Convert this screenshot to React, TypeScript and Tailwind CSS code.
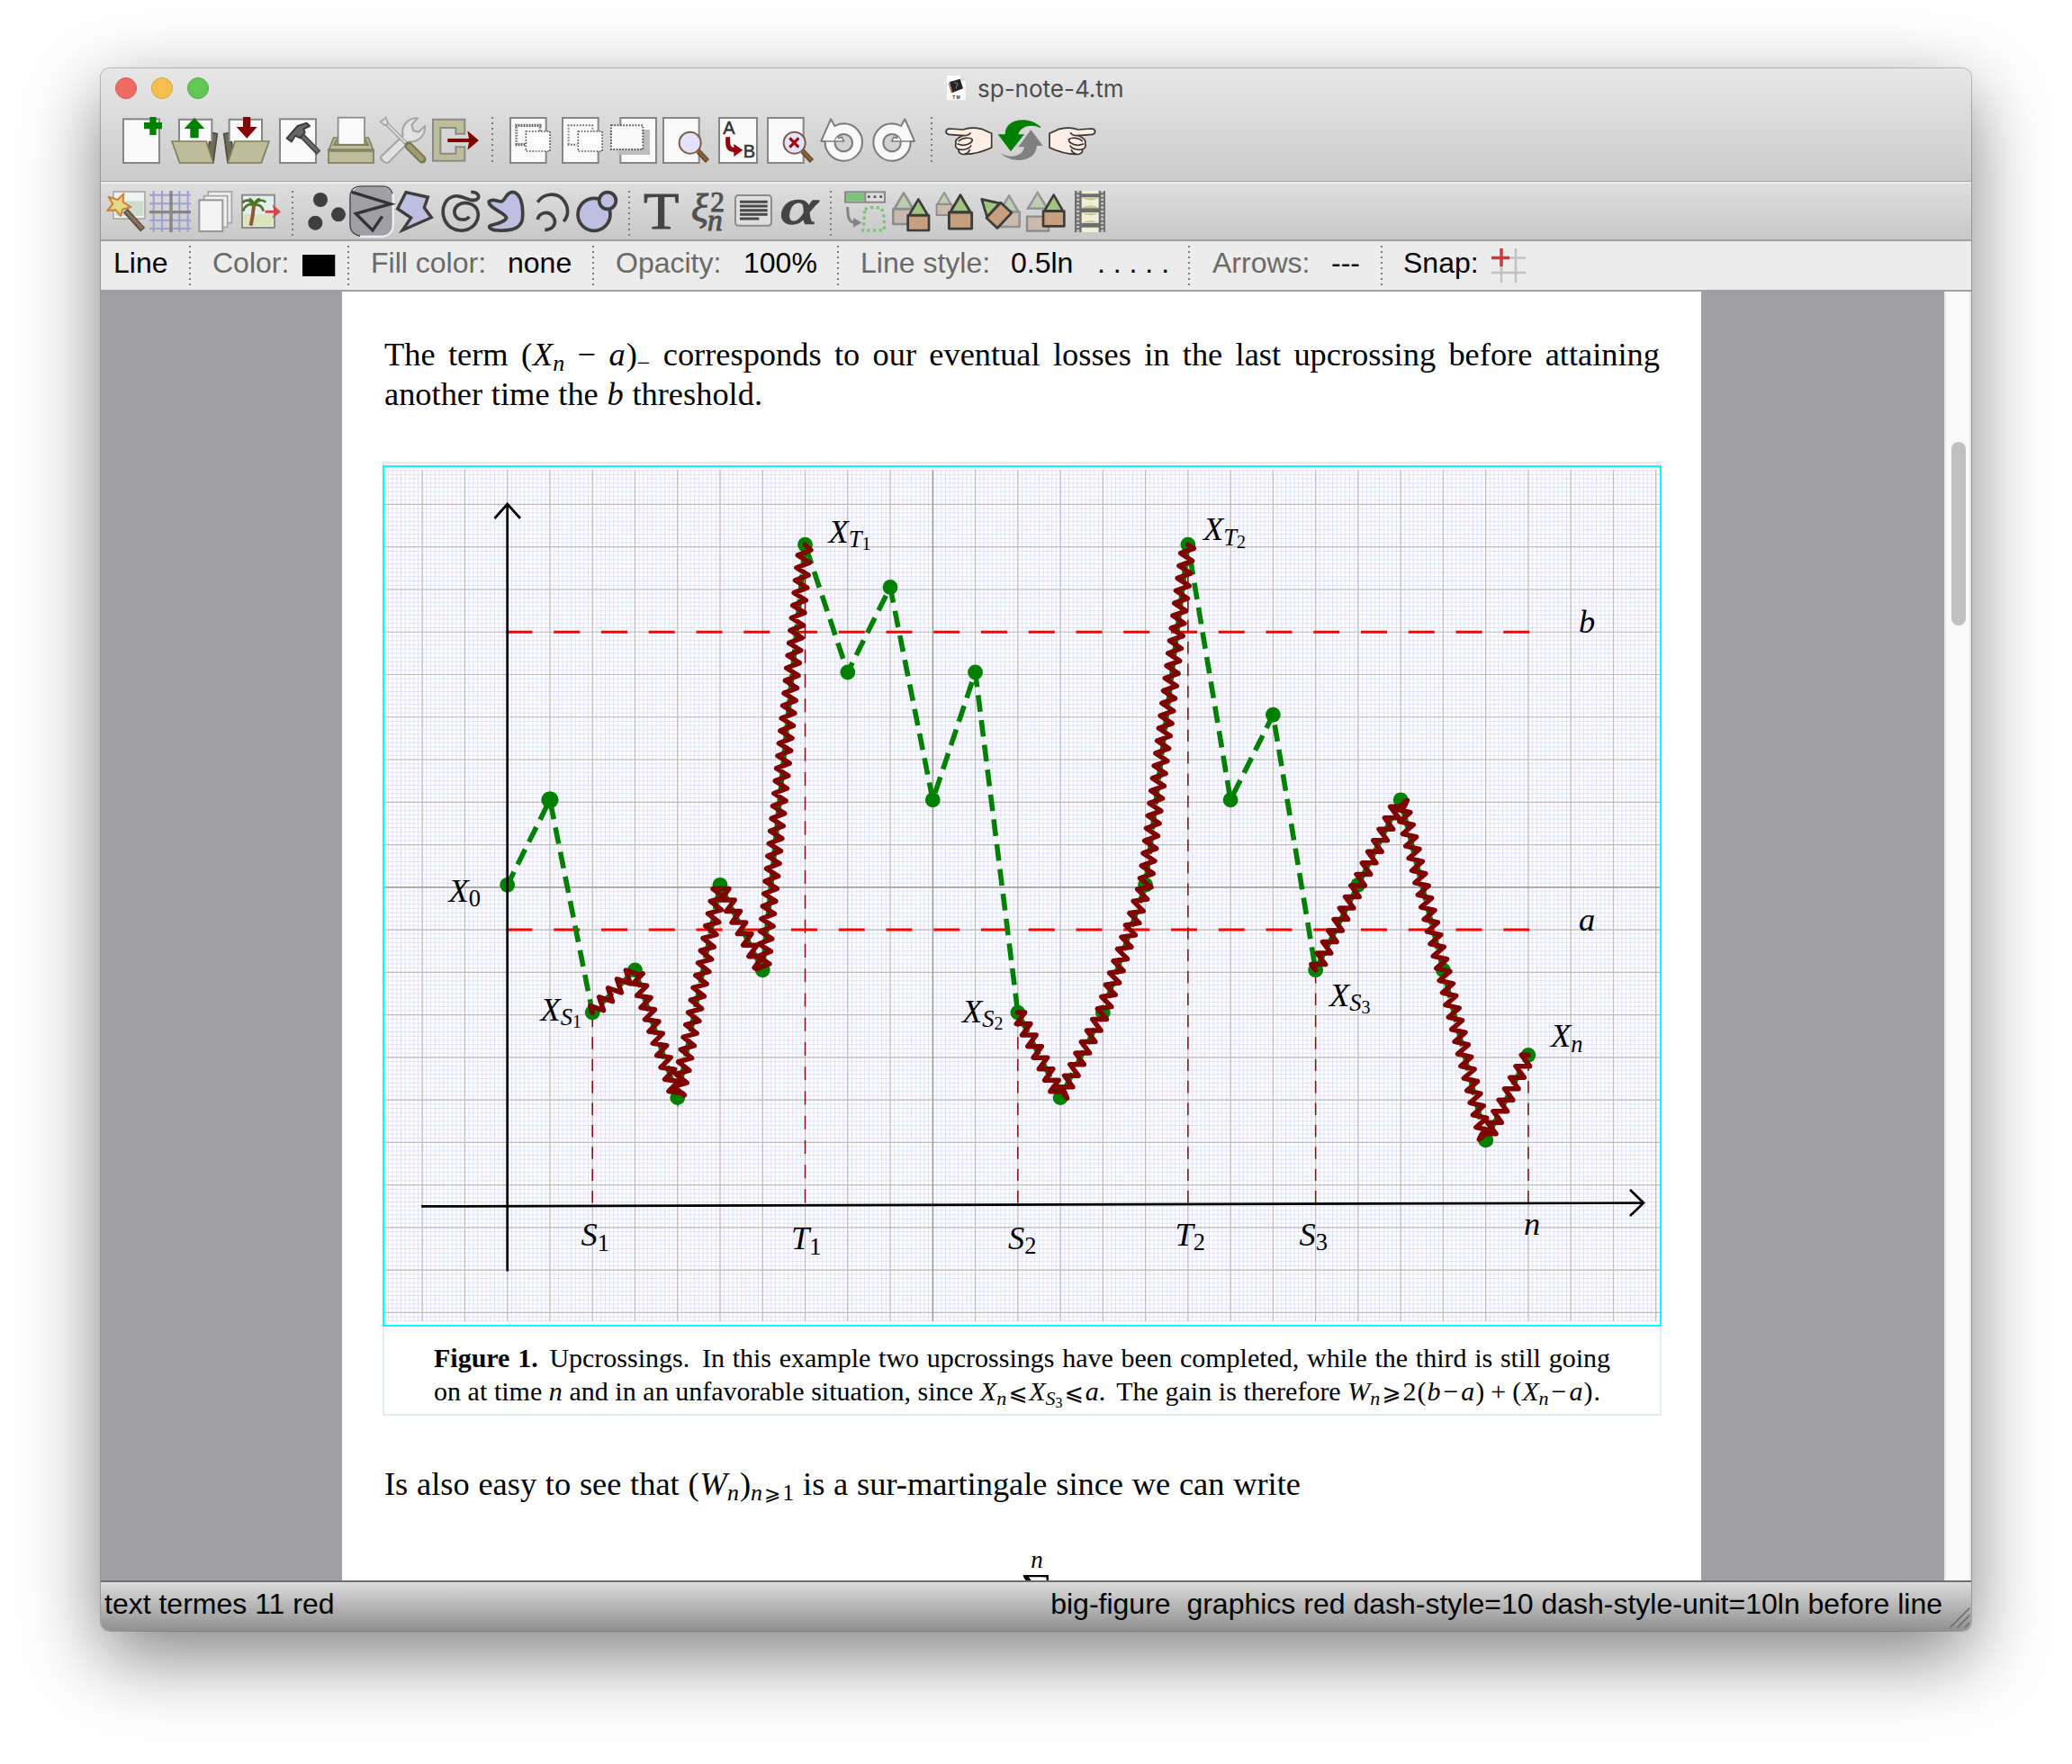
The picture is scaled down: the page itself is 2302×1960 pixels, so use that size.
import React from "react";

type P = { x: number; children?: React.ReactNode };

/* Main toolbar icons live in a 52px slot, drawn at triple resolution. */
const Big = ({ x, children }: P) => (
  <svg className="h-[52px] w-[52px] shrink-0 overflow-visible" viewBox={`${x} 210 156 156`}>
    {children}
  </svg>
);

/* Mode toolbar icons live in a 46px slot, drawn at triple resolution. */
const Small = ({ x, children }: P) => (
  <svg className="h-[46px] w-[46px] shrink-0 overflow-visible" viewBox={`${x} 456 138 138`}>
    {children}
  </svg>
);

const dots = "shrink-0 w-[2px] bg-[repeating-linear-gradient(to_bottom,#7c7c7c_0px,#7c7c7c_2px,transparent_2px,transparent_6px)]";
const BigSep = () => <div className={`${dots} mx-[8px] h-[50px]`} />;
const SmallSep = () => <div className={`${dots} ml-[8px] mr-[10px] h-[50px]`} />;
const FocusSep = () => <div className={`${dots} h-[44px]`} />;

const Sheet = ({ x, y = 213, w = 119, h = 150 }: { x: number; y?: number; w?: number; h?: number }) => (
  <rect x={x} y={y} width={w} height={h} fill="#fafafa" stroke="#868686" strokeWidth="6" />
);

const Lens = ({ dx = 0, cross = false }: { dx?: number; cross?: boolean }) => (
  <g transform={`translate(${dx} 0)`}>
    <path d="M707 324L738 357" stroke="#5f4424" strokeWidth="17" />
    <path d="M708 324L737 355" stroke="#8b6239" strokeWidth="9" />
    <circle cx="680" cy="296" r="36" fill="#e3e3fd" stroke="#7c5c42" strokeWidth="6" />
    {cross && <path d="M664 280L694 311M694 280L664 311" stroke="#a00008" strokeWidth="9" />}
  </g>
);

const Ring = () => (
  <g stroke="#7c7c7c" strokeWidth="6" strokeLinejoin="round">
    <path d="M1192 232A62 62 0 1 1 1130 292L1117 290L1149 217L1162 240A62 62 0 0 1 1192 232Z" fill="#f9f9f9" />
    <circle cx="1192" cy="296" r="29" fill="#d2d2d2" />
    <path d="M1162 292L1169 278L1184 276L1194 292Z" fill="#f9f9f9" stroke="none" />
    <path d="M1117 291H1193L1186 277L1172 281" fill="none" strokeWidth="5" />
  </g>
);

const Hand = () => (
  <g stroke="#3a3330" strokeWidth="5" strokeLinejoin="round" strokeLinecap="round">
    <path
      d="M485 265L452 250C430 245 405 246 390 252L345 249C330 250 329 265 342 268L388 272C370 280 362 288 366 298C362 308 368 316 376 318C372 330 385 336 397 334C425 334 455 326 485 312Z"
      fill="#fdeee6"
    />
    <path d="M388 271C398 274 410 270 414 264M376 290C386 280 410 276 420 284C424 294 408 302 392 304M376 317C388 322 412 316 416 306M397 333C404 330 410 326 412 320M372 300L388 304" fill="none" />
  </g>
);

const Folder = () => (
  <g>
    <path d="M403 262L424 266L411 362L388 360Z" fill="#6b6b58" stroke="#4d4d42" strokeWidth="5" />
    <path d="M297 290V218H406V290" fill="#fafafa" stroke="#868686" strokeWidth="6" />
    <path d="M273 291H387L411 363H299Z" fill="#bdbd9a" stroke="#7e7e5e" strokeWidth="5" />
  </g>
);

const House = ({ x, y, s = 1, o = 1, r = 0 }: { x: number; y: number; s?: number; o?: number; r?: number }) => (
  <g transform={`translate(${x} ${y}) rotate(${r}) scale(${s})`} opacity={o} stroke="#3c3c3c" strokeWidth="8" strokeLinejoin="round">
    <path d="M0 0L-31 53H31Z" fill="#a0c47e" />
    <path d="M-35 54H35V104H-35Z" fill="#c59f7f" />
  </g>
);

const MainToolbar = () => (
  <div className="flex h-[78px] items-start gap-[6px] pl-[20px] pt-[6px]">
    <Big x={96}>
      <Sheet x={111} y={217} w={120} h={146} />
      <path d="M210 210V270M180 239H240" stroke="#008000" strokeWidth="22" />
    </Big>
    <Big x={270}>
      <Folder />
      <path d="M348 212L382 249H362V280H334V249H314Z" fill="#008000" />
    </Big>
    <Big x={444}>
      <g transform="translate(870 0) scale(-1 1)">
        <Folder />
      </g>
      <path d="M523 281L557 243H535V210H510V243H488Z" fill="#800000" />
    </Big>
    <Big x={618}>
      <Sheet x={633} y={217} w={120} h={146} />
      <path d="M702 268L762 329" stroke="#3d3d3d" strokeWidth="19" />
      <path d="M704 270L760 326" stroke="#6a6a6a" strokeWidth="10" />
      <path d="M656 281L672 292L684 272L700 280L716 262L712 250L732 240L722 230L692 240Z" fill="#666" stroke="#3d3d3d" strokeWidth="6" strokeLinejoin="round" />
    </Big>
    <Big x={792}>
      <path d="M812 279H928L944 320H796Z" fill="#bdbd9a" stroke="#7e7e5e" strokeWidth="5" />
      <path d="M822 284L812 304H928L918 284" fill="#9b9b77" stroke="#7e7e5e" strokeWidth="4" />
      <rect x="827" y="212" width="88" height="90" fill="#fafafa" stroke="#868686" strokeWidth="5" />
      <path d="M816 303H926" stroke="#7e7e5e" strokeWidth="5" />
      <rect x="795" y="319" width="150" height="44" fill="#bdbd9a" stroke="#7e7e5e" strokeWidth="5" />
      <path d="M798 324H942" stroke="#8c8c68" strokeWidth="6" />
    </Big>
    <Big x={966}>
      <path
        d="M970 342L1043 272C1036 242 1058 212 1092 214L1072 236L1078 256L1096 260L1116 240C1120 270 1094 294 1064 292L994 362C984 366 966 352 970 342Z"
        fill="#e2e2e2"
        stroke="#a2a2a2"
        strokeWidth="6"
        strokeLinejoin="round"
      />
      <path d="M980 224L1064 308" stroke="#9c9c9c" strokeWidth="13" />
      <path d="M980 224L1062 306" stroke="#e8e8e8" strokeWidth="5" />
      <path d="M968 226L986 212L994 232L982 238Z" fill="#ddd" stroke="#a2a2a2" strokeWidth="5" />
      <path d="M1062 306L1107 351" stroke="#74744c" strokeWidth="27" strokeLinecap="round" />
      <path d="M1064 308L1105 349" stroke="#9c9c70" strokeWidth="17" strokeLinecap="round" />
    </Big>
    <Big x={1140}>
      <path
        d="M1143 218H1249V266H1219V246H1168V332H1219V310H1249V356H1143Z"
        fill="#bdbd9a"
        stroke="#8a8a86"
        strokeWidth="6"
      />
      <path d="M1192 288H1266" stroke="#800000" strokeWidth="12" />
      <path d="M1258 256L1296 288L1258 320L1264 288Z" fill="#800000" />
    </Big>
    <BigSep />
    <Big x={66}>
      <Sheet x={81} />
      <path d="M98 238H184M98 302H130" stroke="#555" strokeWidth="10" strokeDasharray="5 4" />
      <path d="M101 234V306M180 234V260" stroke="#888" strokeWidth="9" strokeDasharray="5 4" />
      <rect x="133" y="258" width="80" height="66" fill="#fff" stroke="#555" strokeWidth="5" strokeDasharray="5 5" />
    </Big>
    <Big x={240}>
      <Sheet x={255} />
      <path d="M272 238H358M272 302H304" stroke="#666" strokeWidth="6" strokeDasharray="5 5" />
      <path d="M275 236V306M355 236V260" stroke="#888" strokeWidth="6" strokeDasharray="5 5" />
      <rect x="307" y="258" width="80" height="66" fill="#fff" stroke="#555" strokeWidth="5" strokeDasharray="5 5" />
    </Big>
    <Big x={414}>
      <Sheet x={448} />
      <rect x="440" y="252" width="106" height="84" fill="#bdbdbd" />
      <rect x="417" y="238" width="106" height="80" fill="#fafafa" stroke="#555" strokeWidth="6" strokeDasharray="5 5" />
    </Big>
    <Big x={588}>
      <Sheet x={591} />
      <Lens />
    </Big>
    <Big x={762}>
      <Sheet x={777} w={126} />
      <text x="790" y="267" fontSize="60" fill="#333" stroke="#333" strokeWidth="1.5" className="[font-family:'Liberation_Sans',sans-serif]">A</text>
      <text x="857" y="345" fontSize="60" fill="#333" stroke="#333" strokeWidth="1.5" className="[font-family:'Liberation_Sans',sans-serif]">B</text>
      <path d="M806 277V296C806 314 816 320 832 320" fill="none" stroke="#960008" strokeWidth="15" />
      <path d="M826 300L856 320L826 342Z" fill="#960008" />
    </Big>
    <Big x={936}>
      <Sheet x={939} />
      <Lens dx={348} cross />
    </Big>
    <Big x={1110}>
      <Ring />
    </Big>
    <Big x={84}>
      <g transform="translate(1345 0) scale(-1 1)">
        <Ring />
      </g>
    </Big>
    <BigSep />
    <Big x={330}>
      <Hand />
    </Big>
    <Big x={504}>
      <path d="M648 247C620 232 582 240 574 268H594L549 325L506 268H530C530 215 605 205 648 242Z" fill="#008000" />
      <path d="M516 330C545 350 590 342 594 310H574L616 252L656 306H636C632 365 545 365 516 330Z" fill="#808080" />
    </Big>
    <Big x={678}>
      <g transform="translate(1163 0) scale(-1 1)">
        <Hand />
      </g>
    </Big>
  </div>
);

const ModeToolbar = () => (
  <div className="relative flex h-[64px] items-start gap-[4px] border-t-2 border-[#ededed] bg-linear-to-b from-[#dedede] to-[#c8c8c8] pl-[4px] pt-[8px]">
    <Small x={48}>
      <rect x="78" y="459" width="105" height="90" fill="#eef3f3" stroke="#a9a9a9" strokeWidth="5" />
      <rect x="86" y="490" width="92" height="50" fill="#cfdccc" />
      <path d="M118 522L176 586" stroke="#5d4a3c" strokeWidth="20" />
      <path d="M120 524L174 582" stroke="#8d7460" strokeWidth="10" />
      <path d="M112 466L110 494L136 510L108 518L102 540L86 520L58 522L76 500L62 476L92 486Z" fill="#e4da84" stroke="#cc7f36" strokeWidth="6" strokeLinejoin="round" />
    </Small>
    <Small x={198}>
      <path d="M212 456V594M240 456V594M298 456V594M326 456V594M198 470H336M198 499H336M198 554H336M198 582H336" stroke="#9f9fd0" strokeWidth="6" />
      <path d="M270 456V594M198 527H336" stroke="#868686" strokeWidth="10" />
    </Small>
    <Small x={348}>
      <rect x="394" y="459" width="78" height="104" fill="#ededed" stroke="#a4a4a4" strokeWidth="5" />
      <rect x="380" y="473" width="78" height="104" fill="#f1f1f1" stroke="#a4a4a4" strokeWidth="5" />
      <rect x="364" y="487" width="78" height="104" fill="#f3f3f3" stroke="#969696" strokeWidth="6" />
    </Small>
    <Small x={498}>
      <rect x="507" y="470" width="108" height="109" fill="#e3efef" stroke="#8c8c8c" strokeWidth="6" />
      <rect x="512" y="534" width="98" height="40" fill="#dce4bc" />
      <path d="M536 572C542 545 544 528 546 506" stroke="#8a5640" strokeWidth="12" fill="none" />
      <path d="M546 504C530 496 516 506 510 524M546 504C530 484 518 484 508 496M546 504C560 484 576 484 586 494M546 504C564 500 574 508 578 524M546 504C544 492 536 484 530 482M546 504C550 490 560 484 566 482" fill="none" stroke="#4e7420" strokeWidth="8" />
      <path d="M584 526H618" stroke="#cc4a4a" strokeWidth="9" />
      <path d="M608 502L636 526L608 548L614 526Z" fill="#cc4a4a" />
    </Small>
    <SmallSep />
    <Small x={720}>
      <g fill="#3e3e3e">
        <circle cx="768" cy="486" r="24" />
        <circle cx="828" cy="535" r="24" />
        <circle cx="751" cy="563" r="24" />
      </g>
    </Small>
    <Small x={870}>
      <rect x="867" y="441" width="143" height="167" rx="36" fill="#a09fa4" stroke="#f4f4fa" strokeWidth="6" />
      <path d="M900 607C878 602 867 588 867 570V477C867 455 880 441 903 441H974C992 441 1004 450 1008 466" fill="none" stroke="#4a4a4e" strokeWidth="5" />
      <path d="M872 460L1002 500L886 532L942 588L974 541" fill="none" stroke="#333" strokeWidth="10" />
    </Small>
    <Small x={1020}>
      <path d="M1053 461L1126 477L1114 512L1138 545L1042 587L1070 546L1025 516Z" fill="#bebee0" stroke="#3e3e3e" strokeWidth="10" />
    </Small>
    <Small x={1170}>
      <path d="M1270 461C1290 458 1302 474 1290 484C1268 498 1244 468 1214 474C1186 480 1172 508 1178 540C1186 574 1212 590 1244 588C1280 584 1300 552 1292 524C1284 496 1244 488 1224 506C1206 524 1216 552 1242 552C1252 552 1260 548 1264 542" fill="none" stroke="#3e3e3e" strokeWidth="11" />
    </Small>
    <Small x={0}>
      <path d="M10 491C22 482 36 490 50 492C64 492 64 462 88 460C114 462 124 500 122 540C122 580 90 590 40 588C20 588 4 578 14 572C36 566 64 560 68 546C66 530 4 512 10 491Z" fill="#bebee0" stroke="#3e3e3e" strokeWidth="11" />
    </Small>
    <Small x={150}>
      <path d="M172 494C190 466 236 456 260 490C276 512 276 540 258 558M172 552C176 530 206 520 222 540C240 564 222 586 196 586" fill="none" stroke="#3e3e3e" strokeWidth="11" />
    </Small>
    <Small x={300}>
      <circle cx="360" cy="535" r="54" fill="#bebee0" stroke="#3e3e3e" strokeWidth="11" />
      <circle cx="405" cy="489" r="28" fill="#bebee0" stroke="#3e3e3e" strokeWidth="11" />
    </Small>
    <SmallSep />
    <Small x={522}>
      <text x="525" y="581" fontSize="172" textLength="118" lengthAdjust="spacingAndGlyphs" fill="#444" stroke="#444" strokeWidth="3" className="[font-family:'Liberation_Serif',serif]">T</text>
    </Small>
    <Small x={672}>
      <g fill="#505050" stroke="#505050" strokeWidth="3" className="italic [font-family:'Liberation_Serif',serif]">
        <text x="684" y="559" fontSize="132">ξ</text>
        <text x="748" y="526" fontSize="94" className="not-italic">2</text>
        <text x="738" y="587" fontSize="100">n</text>
      </g>
    </Small>
    <Small x={822}>
      <rect x="831" y="471" width="120" height="101" rx="10" fill="#dedede" stroke="#8c8c8c" strokeWidth="6" />
      <path d="M846 493H938M846 507H938M846 521H938M846 535H938M846 549H910" stroke="#484848" strokeWidth="9" />
    </Small>
    <Small x={972}>
      <text x="980" y="564" fontSize="166" textLength="124" lengthAdjust="spacingAndGlyphs" fill="#444" stroke="#444" strokeWidth="5" className="italic [font-family:'Liberation_Serif',serif]">α</text>
    </Small>
    <SmallSep />
    <Small x={1194}>
      <rect x="1197" y="460" width="132" height="34" fill="#dcdcdc" stroke="#8a8a8a" strokeWidth="6" />
      <rect x="1200" y="463" width="62" height="28" fill="#7cc47c" />
      <path d="M1264 460V494" stroke="#8a8a8a" strokeWidth="6" />
      <path d="M1272 476H1324" stroke="#555" strokeWidth="8" strokeDasharray="8 12" />
      <path d="M1205 510C1206 545 1208 560 1228 562" fill="none" stroke="#838383" strokeWidth="9" />
      <path d="M1224 546L1252 562L1224 578Z" fill="#838383" />
      <path d="M1262 518L1284 511L1318 513L1328 548L1326 588L1256 588L1260 560Z" fill="none" stroke="#7cc47c" strokeWidth="10" strokeDasharray="10 10" />
    </Small>
    <Small x={144}>
      <House x={192} y={463} o={0.45} />
      <House x={241} y={484} />
    </Small>
    <Small x={294}>
      <House x={327} y={462} s={0.72} o={0.45} />
      <House x={381} y={470} s={1.08} />
    </Small>
    <Small x={444}>
      <House x={543} y={472} o={0.4} />
      <House x={452} y={484} r={-47} />
    </Small>
    <Small x={594}>
      <g opacity="0.45" stroke="#3c3c3c" strokeWidth="7">
        <path d="M638 462L606 515H671Z" fill="#a0c47e" />
        <path d="M603 542H675V590H603Z" fill="#c59f7f" />
      </g>
      <House x={692} y={470} />
    </Small>
    <Small x={744}>
      <rect x="762" y="456" width="102" height="138" fill="#6e6e6e" />
      <path d="M773 456V594M854 456V594" stroke="#c9c9c9" strokeWidth="9" strokeDasharray="7 6" />
      <path d="M785 456H842V466H785ZM785 478H842V514H785ZM785 528H842V564H785ZM785 578H842V594H785Z" fill="#efefd8" />
      <path d="M786 480C804 490 824 490 842 480M786 513C804 502 824 502 842 513M786 530C804 540 824 540 842 530M786 563C804 552 824 552 842 563" fill="#c9c997" />
    </Small>
  </div>
);

const FocusBar = () => (
  <div className="flex h-[54px] items-center border-y-0 bg-[#ececec] text-[32px] whitespace-pre text-black [font-family:'Liberation_Sans',sans-serif]">
    <div className="w-[98px] pb-[6px] pl-[14px]">Line</div>
    <FocusSep />
    <div className="w-[124px] pb-[6px] pl-[24px] text-[#6a6a66]">Color:</div>
    <div className="mr-[13px] h-[24px] w-[37px] border-r border-[#aaa] bg-black" />
    <FocusSep />
    <div className="w-[176px] pb-[6px] pl-[24px] text-[#6a6a66]">Fill color:</div>
    <div className="w-[94px] pb-[6px]">none</div>
    <FocusSep />
    <div className="w-[166px] pb-[6px] pl-[24px] text-[#6a6a66]">Opacity:</div>
    <div className="w-[104px] pb-[6px]">100%</div>
    <FocusSep />
    <div className="w-[191px] pb-[6px] pl-[24px] text-[#6a6a66]">Line style:</div>
    <div className="w-[95px] pb-[6px]">0.5ln</div>
    <div className="w-[102px] pb-[6px] pl-[1px]">. . . . .</div>
    <FocusSep />
    <div className="w-[157px] pb-[6px] pl-[25px] text-[#6a6a66]">Arrows:</div>
    <div className="w-[55px] pb-[6px]">---</div>
    <FocusSep />
    <div className="w-[121px] pb-[6px] pl-[23px]">Snap:</div>
    <svg className="h-[38px] w-[38px]" viewBox="0 0 38 38">
      <path d="M27 0V38M11 20V38M20 10.500H38M0 27H38" stroke="#c2c2c2" strokeWidth="2.500" />
      <path d="M11 0V20M0 10.500H20" stroke="#c83c3c" strokeWidth="3.500" />
    </svg>
  </div>
);

/* ---- chart ---- */

const U = 47.26;
const px = (u: number) => 563.7 + U * u;
const py = (v: number) => 983.3 - U * v;
const walk = [0, 2, -3, -2, -5, 0, -2, 8, 5, 7, 2, 5, -3, -5, -3, 0, 8, 2, 4, -2, 0, 2, -2, -6, -4];

function zigzag(from: number, to: number) {
  const step = 7;
  const amp = 7;
  const out = [`M${px(from)} ${py(walk[from])}`];
  let travelled = 0;
  let next = step / 2;
  let side = 1;
  for (let i = from; i < to; i++) {
    const x0 = px(i);
    const y0 = py(walk[i]);
    const dx = px(i + 1) - x0;
    const dy = py(walk[i + 1]) - y0;
    const len = Math.hypot(dx, dy);
    const ux = dx / len;
    const uy = dy / len;
    while (next <= travelled + len) {
      const t = next - travelled;
      out.push(`L${(x0 + ux * t + uy * amp * side).toFixed(2)} ${(y0 + uy * t - ux * amp * side).toFixed(2)}`);
      side = -side;
      next += step;
    }
    travelled += len;
  }
  out.push(`L${px(to)} ${py(walk[to])}`);
  return out.join("");
}

const range = (a: number, b: number) => Array.from({ length: b - a + 1 }, (_, i) => a + i);
const vLines = (ks: number[], s: number) => ks.map((k) => `M${(1036.3 + k * s).toFixed(2)} 522V1468`).join("");
const hLines = (ks: number[], s: number) => ks.map((k) => `M427 ${(985.8 + k * s).toFixed(2)}H1844`).join("");

const Label = ({ x, y, a, b, c, up = false }: { x: number; y: number; a: string; b?: string; c?: string; up?: boolean }) => (
  <text x={x} y={y} fontSize="36.4" className="italic">
    {a}
    {b && (
      <tspan dy="5.5" fontSize="26.5" className={up ? "not-italic" : "italic"}>
        {b}
      </tspan>
    )}
    {c && (
      <tspan dy="3" fontSize="20" className="not-italic">
        {c}
      </tspan>
    )}
  </text>
);

const Chart = () => (
  <svg className="block h-[953px] w-[1417px] [font-family:'Liberation_Serif',serif]" viewBox="427 519 1417 953">
    <path d={vLines(range(-128, 170), U / 10) + hLines(range(-98, 102), U / 10)} stroke="#e1e1ff" strokeWidth="1" />
    <path d={vLines(range(-12, 17), U) + hLines(range(-9, 10), U)} stroke="#bdbdbd" strokeWidth="1.200" />
    <path d="M1036.500 522V1468M427 985.800H1844" stroke="#979797" strokeWidth="1.300" />

    <path d="M562.500 702.200H1699.500M562.500 1033H1699.500" stroke="#ff0000" strokeWidth="2.900" strokeDasharray="29 23.750" />
    <path
      d={[2, 12, 16, 19, 24].map((i) => `M${px(i)} 1336.500V${py(walk[i])}`).join("")}
      stroke="#8c0a0a"
      strokeWidth="1.500"
      strokeDasharray="13.400 11"
    />
    <path d={`M${px(7)} 1336.500V${py(8)}`} stroke="#8c0a0a" strokeWidth="1.500" strokeDasharray="15 12.260" />

    <polyline
      points={walk.map((v, i) => `${px(i)},${py(v)}`).join(" ")}
      fill="none"
      stroke="#008000"
      strokeWidth="5.600"
      strokeDasharray="18.540 9.270"
      strokeDashoffset="2.200"
    />
    {walk.map((v, i) => (
      <circle key={i} cx={px(i)} cy={py(v)} r={i === 1 ? 9.6 : 8.4} fill="#008000" />
    ))}
    <path
      d={zigzag(2, 7) + zigzag(12, 16) + zigzag(19, 24)}
      fill="none"
      stroke="#800000"
      strokeWidth="5.500"
      strokeLinejoin="round"
      strokeLinecap="round"
    />

    <g fill="none" stroke="#000" strokeWidth="2.700">
      <path d="M563.700 560V1412.600" />
      <path d="M549.500 576L563.700 560L578 576" />
      <path d="M468.200 1340.400L1826 1336.600" />
      <path d="M1811 1322L1826 1336.600L1811 1351" />
    </g>

    <Label x={498.500} y={1001.500} a="X" b="0" up />
    <Label x={600.500} y={1133.500} a="X" b="S" c="1" />
    <Label x={920.500} y={602.500} a="X" b="T" c="1" />
    <Label x={1337} y={600.300} a="X" b="T" c="2" />
    <Label x={1069} y={1135.800} a="X" b="S" c="2" />
    <Label x={1477} y={1117.500} a="X" b="S" c="3" />
    <Label x={1723} y={1163.200} a="X" b="n" />
    <Label x={1754} y={703.300} a="b" />
    <Label x={1754} y={1033.700} a="a" />
    <Label x={645.500} y={1384} a="S" b="1" up />
    <Label x={879} y={1388} a="T" b="1" up />
    <Label x={1120} y={1387.500} a="S" b="2" up />
    <Label x={1305.500} y={1383.700} a="T" b="2" up />
    <Label x={1443.500} y={1383.700} a="S" b="3" up />
    <Label x={1693} y={1372} a="n" />
  </svg>
);

const V = ({ children }: { children: React.ReactNode }) => <i>{children}</i>;
const Sub = ({ children }: { children: React.ReactNode }) => (
  <span className="align-[-6px] text-[26px] leading-none">{children}</span>
);
const CSub = ({ children }: { children: React.ReactNode }) => (
  <span className="align-[-5px] text-[22px] leading-none">{children}</span>
);
const Rel = ({ children }: { children: React.ReactNode }) => (
  <span className="mx-[2px] text-[0.84em] leading-none [font-family:'DejaVu_Serif','DejaVu_Sans',serif]">{children}</span>
);
const Minus = () => <span className="mx-[3px]">−</span>;

const Page = () => (
  <div className="h-[1432px] w-[1510px] overflow-hidden bg-white pl-[45px] pt-[48px] text-black [font-family:'Liberation_Serif',serif]">
    <div className="ml-[2px] h-[44px] w-[1417px] text-[36.400px] leading-[44px] whitespace-nowrap [text-align-last:justify]">
      The term <span className="mr-[1px]">(</span><V>X</V>
      <Sub><V>n</V></Sub> − <V>a</V><span className="ml-[1px]">)</span><Sub>−</Sub> corresponds to our eventual losses in the last upcrossing before attaining
    </div>
    <div className="ml-[2px] h-[44px] w-[420px] text-[36.400px] leading-[44px] whitespace-nowrap [text-align-last:justify]">
      another time the <V>b</V> threshold.
    </div>

    <div className="mt-[53px] h-[1060px] w-[1421px] border-2 border-[#e5eeeb]">
      <div className="-mx-[2px] mt-[2px] h-[957px] border-2 border-[#00ffff]">
        <Chart />
      </div>
      <div className="ml-[55px] mt-[16px] h-[37px] w-[1307px] text-[30px] leading-[37px] whitespace-nowrap [text-align-last:justify]">
        <b className="mr-[4px]">Figure 1.</b> <span className="mr-[5px]">Upcrossings.</span> In this example two upcrossings have been completed, while the third is still going
      </div>
      <div className="ml-[55px] h-[37px] w-[1296px] text-[30px] leading-[37px] whitespace-nowrap [text-align-last:justify]">
        on at time <V>n</V> and in an unfavorable situation, since <V>X</V>
        <CSub><V>n</V></CSub>
        <Rel>⩽</Rel>
        <V>X</V>
        <CSub><V>S</V><span className="align-[-3px] text-[16px]">3</span></CSub>
        <Rel>⩽</Rel>
        <V>a</V><span className="mr-[5px]">.</span> The gain is therefore <V>W</V>
        <CSub><V>n</V></CSub>
        <Rel>⩾</Rel>2<span className="mx-[1px]">(</span><V>b</V><Minus /><V>a</V><span className="ml-[1px]">)</span><span className="mx-[7px]">+</span><span className="mr-[1px]">(</span><V>X</V>
        <CSub><V>n</V></CSub><Minus /><V>a</V><span className="mx-[1px]">)</span>.
      </div>
    </div>

    <div className="ml-[2px] mt-[54px] h-[44px] w-[1018px] text-[36.400px] leading-[44px] whitespace-nowrap [text-align-last:justify]">
      Is also easy to see that <span className="mr-[1px]">(</span><V>W</V>
      <Sub><V>n</V></Sub><span className="ml-[1px]">)</span><Sub><V>n</V><Rel>⩾</Rel>1</Sub> is a sur-martingale since we can write
    </div>

    <div className="ml-[708px] mt-[47px] flex w-[38px] flex-col items-center">
      <div className="h-[30px] text-[27px] leading-[30px] italic">n</div>
      <div className="h-[38px] text-[52px] leading-[38px]">∑</div>
    </div>
  </div>
);

export default function App() {
  return (
    <div className="h-[1960px] w-[2302px] overflow-hidden bg-white pl-[112px] pt-[76px]">
      <div className="h-[1736px] w-[2078px] overflow-hidden rounded-[10px] shadow-[0_0_0_1px_rgba(0,0,0,0.22),0_28px_86px_rgba(0,0,0,0.5)]">
        <div className="h-[126px] border-b border-[#a5a5a5] bg-linear-to-b from-[#e7e7e7] to-[#cbcbcb]">
          <div className="flex h-[48px] items-start">
            <div className="flex gap-[16px] pl-[16px] pt-[10px]">
              <div className="h-[24px] w-[24px] rounded-full border border-[#d8574c] bg-[#ed6b60]" />
              <div className="h-[24px] w-[24px] rounded-full border border-[#dba33a] bg-[#f5bf4f]" />
              <div className="h-[24px] w-[24px] rounded-full border border-[#53a941] bg-[#62c655]" />
            </div>
            <svg className="ml-[819px] mt-[7px] h-[30px] w-[23px]" viewBox="333 70 69 90">
              <path d="M334 71H382L400 90V156H334Z" fill="#fcfcfc" stroke="#d8d8d8" strokeWidth="2" />
              <path d="M382 71V90H400Z" fill="#ddd" />
              <path d="M345 94L380 84L390 116L354 130Z" fill="#232323" />
              <path d="M343 98L352 130" stroke="#c8643c" strokeWidth="4" />
              <path d="M360 98C368 94 376 100 370 106C366 110 366 112 368 116" fill="none" stroke="#999" strokeWidth="3" />
              <text x="355" y="150" fontSize="15" fontWeight="bold" textLength="25" fill="#333" className="[font-family:'Liberation_Sans',sans-serif]">TM</text>
            </svg>
            <div className="ml-[12px] mt-[5px] text-[26px] leading-[36px] text-[#4c4c4c] [font-family:Inter,sans-serif]">sp-note-4.tm</div>
          </div>
          <MainToolbar />
        </div>
        <ModeToolbar />
        <div className="h-[2px] bg-[#a09fa4]" />
        <FocusBar />
        <div className="h-[2px] bg-[#a09fa4]" />
        <div className="flex h-[1432px] bg-[#a09fa4]">
          <div className="w-[268px]" />
          <Page />
          <div className="flex-1" />
          <div className="w-[30px] border-x-2 border-[#e9e9e9] bg-[#fafafa] pl-[6px] pt-[167px]">
            <div className="h-[204px] w-[16px] rounded-full bg-[#c1c1c1]" />
          </div>
        </div>
        <div className="flex h-[56px] items-center justify-between border-t-2 border-[#6e6e6e] bg-linear-to-b from-[#dcdcdc] to-[#909090] pl-[4px] text-[32px] whitespace-pre text-black [font-family:'Liberation_Sans',sans-serif]">
          <div className="pb-[6px]">text termes 11 red</div>
          <div className="flex h-full items-center">
            <div className="pb-[6px]">{"big-figure  graphics red dash-style=10 dash-style-unit=10ln before line"}</div>
            <svg className="ml-[8px] mr-[1px] mb-[3px] h-[23px] w-[23px] self-end" viewBox="1099 440 69 69">
              <path d="M1101 507L1166 442M1125 507L1166 466M1150 507L1166 491" stroke="#707070" strokeWidth="5" />
            </svg>
          </div>
        </div>
      </div>
    </div>
  );
}
